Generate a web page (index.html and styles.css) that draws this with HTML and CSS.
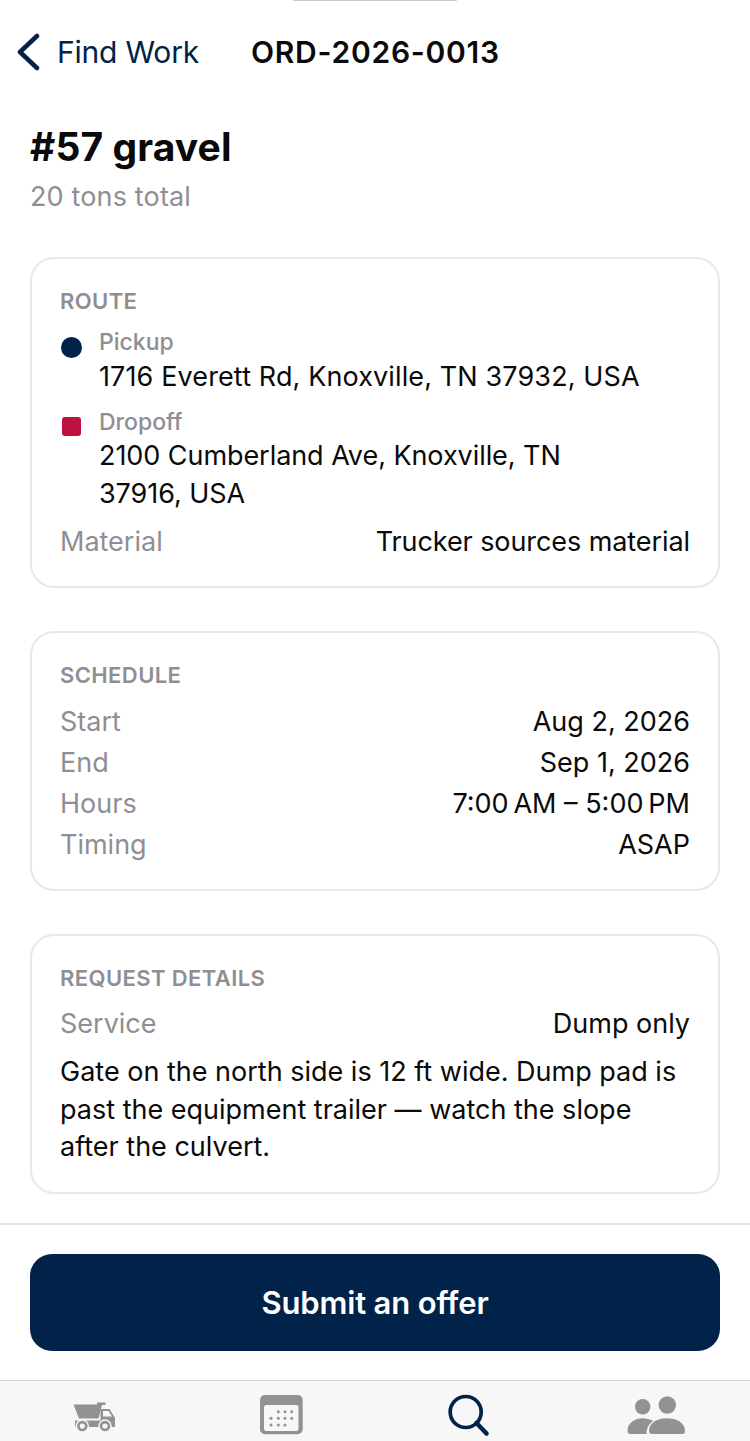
FILE: index.html
```html
<!DOCTYPE html>
<html lang="en">
<head>
  <meta charset="UTF-8">
  <title>ORD-2026-0013</title>
  <link rel="stylesheet" href="styles.css">
</head>
<body>
  <div class="screen">
    <div class="notch"></div>

    <header class="nav">
      <a class="back">
        <svg class="chevron" width="24" height="38" viewBox="0 0 24 38">
          <path d="M21 3 L4 19 L21 35" fill="none" stroke="#012249" stroke-width="4.5" stroke-linecap="round" stroke-linejoin="round"/>
        </svg>
        <span>Find Work</span>
      </a>
      <div class="nav-title">ORD-2026-0013</div>
    </header>

    <main class="content">
      <h1>#57 gravel</h1>
      <p class="subtitle">20 tons total</p>

      <section class="card card-route">
        <h2>ROUTE</h2>
        <div class="stop stop-pick">
          <span class="dot"></span>
          <div>
            <div class="stop-label">Pickup</div>
            <div class="stop-address">1716 Everett Rd, Knoxville, TN 37932, USA</div>
          </div>
        </div>
        <div class="stop stop-drop">
          <span class="square"></span>
          <div>
            <div class="stop-label">Dropoff</div>
            <div class="stop-address">2100 Cumberland Ave, Knoxville, TN<br>37916, USA</div>
          </div>
        </div>
        <div class="row row-material"><span>Material</span><b>Trucker sources material</b></div>
      </section>

      <section class="card card-schedule">
        <h2>SCHEDULE</h2>
        <div class="row"><span>Start</span><b>Aug 2, 2026</b></div>
        <div class="row"><span>End</span><b>Sep 1, 2026</b></div>
        <div class="row"><span>Hours</span><b>7:00&#8239;AM – 5:00&#8239;PM</b></div>
        <div class="row"><span>Timing</span><b>ASAP</b></div>
      </section>

      <section class="card card-details">
        <h2>REQUEST DETAILS</h2>
        <div class="row"><span>Service</span><b>Dump only</b></div>
        <p class="notes">Gate on the north side is 12 ft wide. Dump pad is past the equipment trailer — watch the slope after the culvert.</p>
      </section>
    </main>

    <div class="action-bar">
      <button type="button">Submit an offer</button>
    </div>

    <nav class="tabs">
      <svg width="44" height="33" viewBox="0 0 44 33">
        <path d="M1.5 4.5 H25 V2.5 H33.5 V5 H30 L26.5 18.5 H7 Z" fill="#929292"/>
        <path d="M3 20.5 H28.5 V9 H37.5 L43 18 V27 H3 Z M31 11 V16.5 H40 L36.5 11 Z" fill="#929292" fill-rule="evenodd"/>
        <circle cx="10.3" cy="26" r="6" fill="#929292" stroke="#f7f7f7" stroke-width="1.5"/>
        <circle cx="10.3" cy="26" r="2.6" fill="#f7f7f7"/>
        <circle cx="33" cy="26" r="6" fill="#929292" stroke="#f7f7f7" stroke-width="1.5"/>
        <circle cx="33" cy="26" r="2.6" fill="#f7f7f7"/>
      </svg>
      <svg width="44" height="40" viewBox="0 0 44 40">
        <rect x="0" y="0" width="42.7" height="39.3" rx="5" fill="#929292"/>
        <rect x="4" y="10" width="34.5" height="26" rx="2.5" fill="#f7f7f7"/>
        <g fill="#929292">
          <circle cx="18.3" cy="16.7" r="1.5"/><circle cx="25" cy="16.7" r="1.5"/><circle cx="31.7" cy="16.7" r="1.5"/>
          <circle cx="11" cy="23.3" r="1.5"/><circle cx="18.3" cy="23.3" r="1.5"/><circle cx="25" cy="23.3" r="1.5"/><circle cx="31.7" cy="23.3" r="1.5"/>
          <circle cx="11" cy="30" r="1.5"/><circle cx="18.3" cy="30" r="1.5"/><circle cx="25" cy="30" r="1.5"/>
        </g>
      </svg>
      <svg width="44" height="44" viewBox="0 0 44 44">
        <circle cx="17.7" cy="18" r="15.5" fill="none" stroke="#012249" stroke-width="3.7"/>
        <path d="M28.5 29 L38.5 39.5" fill="none" stroke="#012249" stroke-width="4.5" stroke-linecap="round"/>
      </svg>
      <svg width="60" height="42" viewBox="0 0 60 42">
        <g fill="#929292">
          <circle cx="15.7" cy="12.7" r="7.7"/>
          <circle cx="40.3" cy="11" r="8.7"/>
          <path d="M0.5 37 C0.5 29 8 24.3 15.5 24.3 C19 24.3 23 25.3 26 27 C22 30 19.5 34 19.5 40 H3.5 Q0.5 40 0.5 37 Z"/>
          <path d="M22 37 C22 29 30 24.3 40 24.3 C50 24.3 58 29 58 37 Q58 40 55 40 H25 Q22 40 22 37 Z"/>
        </g>
      </svg>
    </nav>
  </div>
</body>
</html>
```

FILE: styles.css
```css
* {
  box-sizing: border-box;
}
html, body {
  margin: 0;
  padding: 0;
  background: #fff;
}
.screen {
  width: 750px;
  height: 1441px;
  overflow: hidden;
  position: relative;
  display: flex;
  flex-direction: column;
  font-family: Inter, "Liberation Sans", sans-serif;
  color: #0a0a0a;
}
.notch {
  position: absolute;
  top: 0;
  left: 293px;
  width: 164px;
  height: 1px;
  background: #c9c9c9;
  border-radius: 0 0 3px 3px;
}
.nav {
  display: flex;
  align-items: center;
  height: 38px;
  margin-top: 33px;
  padding-left: 16px;
}
.back {
  display: flex;
  align-items: center;
  color: #012249;
  font-size: 30px;
  letter-spacing: -0.2px;
}
.chevron {
  margin-right: 17px;
}
.nav-title {
  margin-left: 52px;
  font-size: 30px;
  font-weight: 600;
  letter-spacing: 0.75px;
}
.content {
  flex: 1;
  padding: 0 30px;
}
h1 {
  margin: 53px 0 0;
  font-size: 39px;
  line-height: 46px;
  font-weight: 700;
  letter-spacing: 0.1px;
}
.subtitle {
  margin: 11px 0 0;
  font-size: 27px;
  line-height: 32px;
  letter-spacing: 0.15px;
  color: #8e8e93;
}
.card {
  border: 2px solid #e8e8ea;
  border-radius: 24px;
  padding: 28px 28px 0;
  margin-bottom: 43px;
}
.card-route {
  margin-top: 44px;
  height: 331px;
}
.card-schedule {
  height: 260px;
}
.card-details {
  height: 260px;
}
h2 {
  margin: 0;
  font-size: 22px;
  line-height: 28px;
  font-weight: 600;
  color: #8e8e93;
  letter-spacing: 0.4px;
}
.stop {
  display: flex;
  margin-top: 13px;
}
.stop-drop {
  margin-top: 12px;
}
.dot {
  flex: none;
  width: 21px;
  height: 21px;
  margin: 9px 17px 0 1px;
  border-radius: 50%;
  background: #012249;
}
.square {
  flex: none;
  width: 19px;
  height: 19px;
  margin: 9px 18px 0 2px;
  border-radius: 3px;
  background: #bd1241;
}
.stop-label {
  font-size: 23px;
  line-height: 28px;
  font-weight: 500;
  color: #8e8e93;
}
.stop-address {
  font-size: 27px;
  line-height: 38px;
  margin-top: 1px;
}
.stop-pick .stop-address {
  margin-top: 2px;
  letter-spacing: 0.12px;
}
.stop-drop .stop-address {
  letter-spacing: -0.06px;
}
.row {
  display: flex;
  justify-content: space-between;
  font-size: 27px;
  line-height: 41px;
}
.row span {
  color: #8e8e93;
}
.row b {
  font-weight: 400;
}
.row-material {
  margin-top: 8px;
}
.row-material b {
  letter-spacing: -0.08px;
}
.card-schedule h2 {
  margin-bottom: 12px;
}
.card-details h2 {
  margin-bottom: 11px;
}
.notes {
  margin: 9px 0 0;
  font-size: 27px;
  line-height: 37.5px;
}
.action-bar {
  position: absolute;
  left: 0;
  right: 0;
  top: 1223px;
  height: 157px;
  background: #fff;
  border-top: 2px solid #e2e2e4;
  padding: 29px 30px 0;
}
.action-bar button {
  display: block;
  width: 100%;
  height: 97px;
  border: none;
  border-radius: 22px;
  background: #012249;
  color: #fff;
  font-family: inherit;
  font-size: 31px;
  font-weight: 600;
  letter-spacing: -0.15px;
  cursor: pointer;
}
.tabs {
  position: absolute;
  left: 0;
  right: 0;
  top: 1380px;
  height: 61px;
  background: #f7f7f7;
  border-top: 1px solid #d6d6d6;
}
.tabs svg {
  position: absolute;
}
.tabs svg:nth-child(1) { left: 72px; top: 19px; }
.tabs svg:nth-child(2) { left: 260px; top: 14px; }
.tabs svg:nth-child(3) { left: 448px; top: 13px; }
.tabs svg:nth-child(4) { left: 627px; top: 13px; }
```
